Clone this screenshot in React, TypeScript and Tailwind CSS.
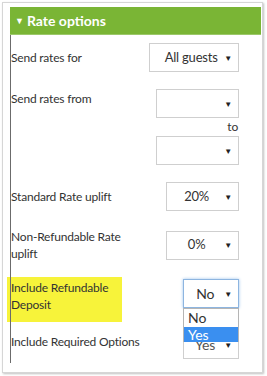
import React from 'react'

// small native-looking select box
function SelectBox({ value, className = '', focused = false }: { value: string; className?: string; focused?: boolean }) {
  return (
    <div
      className={`flex items-center h-[29px] border bg-white pr-[6px] ${
        focused ? 'border-[#8db5e0] shadow-[0_0_3px_#9cc3ec]' : 'border-[#cfcfcf]'
      } ${className}`}
    >
      <span className="flex-1 text-center pl-[2px]">{value}</span>
      <span className="text-[8px] text-[#222]">▼</span>
    </div>
  )
}

export default function App() {
  return (
    <div className="w-[267px] h-[376px] bg-white p-[2px] text-[#333]" style={{ fontFamily: 'Lato, "Liberation Sans", sans-serif' }}>
      <div className="h-[371px] w-[261px] border border-[#d6d6d6] shadow-[1px_1px_2px_rgba(0,0,0,0.25)] pl-[7px] pt-[4px] pr-[1px]">
        {/* Header */}
        <div className="h-[28px] bg-[#7ab535] border-b border-[#9cc86a] flex items-center pl-[5px] text-white font-bold text-[14px]">
          <span className="text-[9px] mr-[3px]">▼</span>
          Rate options
        </div>

        {/* Body */}
        <div className="border-l border-[#6b6b6b] h-[328px] pr-[22px] text-[12px] tracking-[-0.2px]">
          {/* Send rates for */}
          <div className="flex items-center justify-between pt-[8px]">
            <span>Send rates for</span>
            <SelectBox value="All guests" className="w-[90px] pl-[6px] text-[13px]" />
          </div>

          {/* Send rates from */}
          <div className="flex justify-between pt-[17px]">
            <span className="pt-[1px]">Send rates from</span>
            <div className="flex flex-col items-end w-[83px]">
              <SelectBox value="" className="w-full" />
              <span className="leading-[18px] pr-[1px]">to</span>
              <SelectBox value="" className="w-full" />
            </div>
          </div>

          {/* Standard Rate uplift */}
          <div className="flex items-center justify-between pt-[17px]">
            <span>Standard Rate uplift</span>
            <SelectBox value="20%" className="w-[73px] text-[13px]" />
          </div>

          {/* Non-Refundable Rate uplift */}
          <div className="flex items-center justify-between pt-[17px]">
            <span className="leading-[17px] w-[125px]">Non-Refundable Rate uplift</span>
            <SelectBox value="0%" className="w-[73px] text-[13px]" />
          </div>

          {/* Include Refundable Deposit */}
          <div className="flex items-start justify-between pt-[15px] -ml-[4px]">
            <span className="bg-[linear-gradient(to_right,#f7f33a_3px,#6b6b6b_3px,#6b6b6b_4px,#f7f33a_4px)] w-[115px] h-[45px] pl-[4px] pt-[2px] leading-[17px]">
              Include Refundable Deposit
            </span>
            <div className="relative w-[56px] pt-[2px]">
              <SelectBox value="No" focused className="w-full text-[14px]" />
              {/* open dropdown list */}
              <div className="absolute left-0 top-[31px] w-full bg-white border-x border-t border-[#b5b5b5] z-10 text-[14px] tracking-normal">
                <div className="h-[18px] leading-[18px] pl-[4px]">No</div>
                <div className="h-[15px] leading-[15px] pl-[4px] bg-[#3a8ff0] text-white">Yes</div>
              </div>
            </div>
          </div>

          {/* Include Required Options */}
          <div className="flex items-end justify-between mt-[8px]">
            <span className="pb-[8px]">Include Required Options</span>
            <SelectBox value="Yes" className="w-[56px] text-[14px] text-[#555]" />
          </div>
        </div>
      </div>
    </div>
  )
}
